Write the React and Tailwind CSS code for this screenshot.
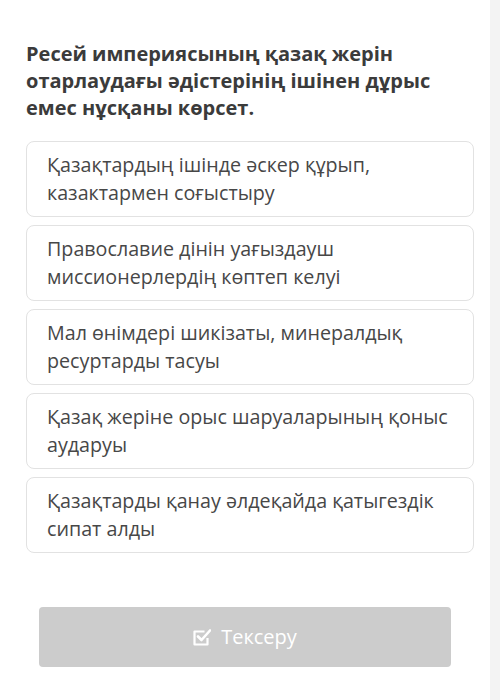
const options = [
  'Қазақтардың ішінде әскер құрып, казактармен соғыстыру',
  'Православие дінін уағыздауш миссионерлердің көптеп келуі',
  'Мал өнімдері шикізаты, минералдық ресуртарды тасуы',
  'Қазақ жеріне орыс шаруаларының қоныс аударуы',
  'Қазақтарды қанау әлдеқайда қатыгездік сипат алды',
]

function CheckIcon() {
  return (
    <svg width="18" height="18" viewBox="0 0 18 18" fill="none" className="shrink-0">
      <path d="M14.5 10v6.5H1.5V3.5H11.5" stroke="white" strokeWidth="2.2" strokeLinejoin="round" />
      <path d="M5 8.5l3.5 3.5L17 2.5" stroke="white" strokeWidth="2.6" strokeLinecap="round" strokeLinejoin="round" />
    </svg>
  )
}

export default function App() {
  return (
    <div className="flex h-[700px] w-[500px] bg-white font-['Open_Sans',sans-serif]">
      <main className="flex w-[490px] flex-col px-[26px] pt-[40px]">
        <h1 className="text-[20px] font-bold leading-[27px] text-[#3b3b3b]">
          Ресей империясының қазақ жерін отарлаудағы әдістерінің ішінен дұрыс емес нұсқаны көрсет.
        </h1>

        <ul className="mt-[20px] flex w-[448px] flex-col gap-[8px]">
          {options.map((text) => (
            <li
              key={text}
              className="flex h-[76px] items-center rounded-[8px] border border-[#e2e2e2] bg-white pl-[20px] pr-[10px] text-[19.7px] leading-[28px] text-[#474747]"
            >
              {text}
            </li>
          ))}
        </ul>

        <button
          disabled
          className="mx-[13px] mt-[54px] flex h-[60px] items-center justify-center gap-[10px] rounded-[4px] bg-[#cccccc] text-[20px] text-white"
        >
          <CheckIcon />
          Тексеру
        </button>
      </main>
      <div className="w-[10px] bg-[#f3f3f3]" />
    </div>
  )
}
